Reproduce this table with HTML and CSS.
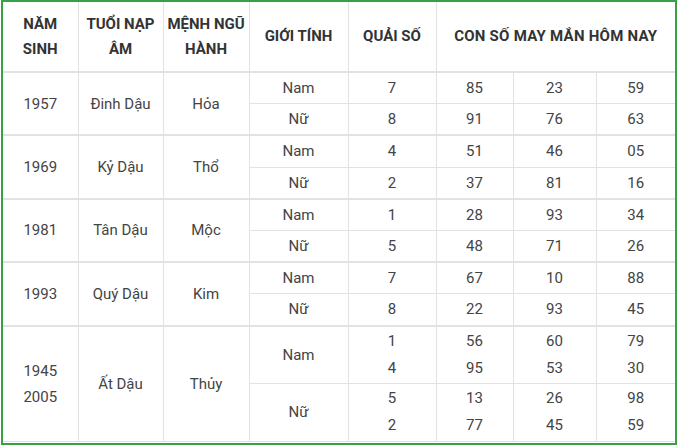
FILE: index.html
```html
<!DOCTYPE html>
<html lang="vi">
<head>
<meta charset="utf-8">
<link rel="stylesheet" href="styles.css">
</head>
<body>
<div class="frame">
<table class="lucky">
<colgroup>
<col class="c1"><col class="c2"><col class="c3"><col class="c4"><col class="c5"><col class="c6"><col class="c7"><col class="c8">
</colgroup>
<thead>
<tr class="head">
<th>NĂM<br>SINH</th>
<th>TUỔI NẠP<br>ÂM</th>
<th>MỆNH NGŨ<br>HÀNH</th>
<th>GIỚI TÍNH</th>
<th>QUẢI SỐ</th>
<th colspan="3" class="wide">CON SỐ MAY MẮN HÔM NAY</th>
</tr>
</thead>
<tbody>
<tr class="sub first"><td rowspan="2">1957</td><td rowspan="2">Đinh Dậu</td><td rowspan="2">Hỏa</td><td>Nam</td><td>7</td><td>85</td><td>23</td><td>59</td></tr>
<tr class="sub"><td>Nữ</td><td>8</td><td>91</td><td>76</td><td>63</td></tr>
<tr class="sub first"><td rowspan="2">1969</td><td rowspan="2">Kỷ Dậu</td><td rowspan="2">Thổ</td><td>Nam</td><td>4</td><td>51</td><td>46</td><td>05</td></tr>
<tr class="sub"><td>Nữ</td><td>2</td><td>37</td><td>81</td><td>16</td></tr>
<tr class="sub first"><td rowspan="2">1981</td><td rowspan="2">Tân Dậu</td><td rowspan="2">Mộc</td><td>Nam</td><td>1</td><td>28</td><td>93</td><td>34</td></tr>
<tr class="sub"><td>Nữ</td><td>5</td><td>48</td><td>71</td><td>26</td></tr>
<tr class="sub first"><td rowspan="2">1993</td><td rowspan="2">Quý Dậu</td><td rowspan="2">Kim</td><td>Nam</td><td>7</td><td>67</td><td>10</td><td>88</td></tr>
<tr class="sub"><td>Nữ</td><td>8</td><td>22</td><td>93</td><td>45</td></tr>
<tr class="tall first"><td rowspan="2" class="years">1945<br>2005</td><td rowspan="2">Ất Dậu</td><td rowspan="2">Thủy</td><td>Nam</td><td class="multi">1<br>4</td><td class="multi">56<br>95</td><td class="multi">60<br>53</td><td class="multi">79<br>30</td></tr>
<tr class="tall"><td>Nữ</td><td class="multi">5<br>2</td><td class="multi">13<br>77</td><td class="multi">26<br>45</td><td class="multi">98<br>59</td></tr>
</tbody>
</table>
</div>
</body>
</html>
```
FILE: styles.css
```css
html, body {
  margin: 0;
  padding: 0;
  background: #fff;
}
body {
  padding-left: 1px;
  font-family: Roboto, "Liberation Sans", sans-serif;
}
.frame {
  width: 676px;
  height: 445px;
  box-sizing: border-box;
  border: 2px solid #3aa046;
  overflow: hidden;
}
.lucky {
  width: 672px;
  table-layout: fixed;
  border-collapse: collapse;
  font-size: 15px;
  color: #444;
}
.c1 { width: 75px; }
.c2 { width: 85px; }
.c3 { width: 86px; }
.c4 { width: 99px; }
.c5 { width: 88px; }
.c6 { width: 77px; }
.c7 { width: 83px; }
.c8 { width: 79px; }
.lucky th, .lucky td {
  border: 1px solid #e2e2e2;
  text-align: center;
  vertical-align: middle;
  padding: 0;
}
.lucky th {
  font-weight: 700;
  color: #333;
  line-height: 25px;
  height: 69px;
  border-top: none;
  border-bottom: 2px solid #e2e2e2;
}
.lucky th.wide { letter-spacing: 0.25px; }
.lucky tr > :first-child { border-left: none; }
.lucky tr > :last-child { border-right: none; }
.lucky td { line-height: 22px; }
.lucky .sub td { height: 30.2px; }
.lucky .tall td { height: 56.5px; }
.lucky .first td { border-top: 2px solid #e2e2e2; }
.lucky td.multi { line-height: 27px; }
.lucky td.years { line-height: 26px; }
```
